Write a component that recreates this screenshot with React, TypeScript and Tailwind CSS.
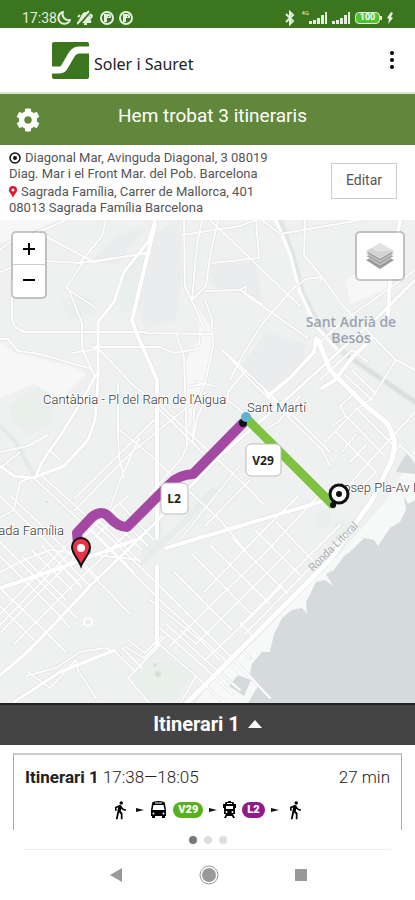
import React, { useState } from "react";
import { FaCog } from "react-icons/fa";
import { MdDirectionsWalk } from "react-icons/md";

interface Road {
  d: string;
  width: number;
}

// Street network of the base map, in map units
const minorRoads: string[] = [
  "M12 60 L12 98 Q14 112 30 112 L145 112 M145 113 L212 114",
  "M0 119 L8 119 L18 131 L40 134 L92 149",
  "M68 68 L82 103 L82 128 L94 155",
  "M92 127 L160 127 L174 133 L198 129 L200 115",
  "M72 133 L92 130 L98 128 L134 166 L142 172 L206 236",
  "M176 113 L184 137 L187 225 L182 238 L150 274",
  "M184 0 L185 66 L197 92 L205 110",
  "M202 0 L197 25 L192 80",
  "M218 0 L210 36 L206 66 L192 80",
  "M256 0 L259 38 L212 43",
  "M205 71 L240 70 L246 66 L245 74 L308 118 M240 70 L262 84",
  "M205 80 L212 100 L213 126 L206 160 L194 190 L193 222",
  "M120 210 L150 235 L220 300 L245 330",
  "M146 172 L250 270 L263 284",
  "M118 165 L118 210 L119 238 L124 258",
  "M206 172 L132 232 L75 290",
  "M154 200 L75 278 M139 218 L120 260 L110 288",
  "M205 180 L197 198 L194 216",
  "M0 232 L28 226 L48 215 M0 248 L20 232",
  "M34 258 L90 310 L160 380 L225 440",
  "M42 256 L98 306 L170 376 L240 446 L270 478",
  "M20 262 L14 290 L0 298",
  "M0 276 L45 320 L90 366 L86 372 L60 398 L8 450",
  "M10 275 L54 318 L98 361 L130 394",
  "M0 322 L40 362 L77 398 M0 336 L58 394 L70 408",
  "M0 368 L46 412 L66 432 M0 386 L34 420",
  "M0 413 L40 372 L84 328 L108 304",
  "M0 405 L36 368 L76 326 L100 300 L128 276",
  "M14 424 L60 378 L108 332 L150 290",
  "M0 394 L38 354 L66 326",
  "M22 336 L66 380 M32 330 L72 370 M42 326 L80 364",
  "M100 302 L130 332 L140 342 M92 310 L122 340 L134 352",
  "M108 296 L142 330 M112 290 L148 326 M120 284 L154 320",
  "M0 352 L24 340 L50 330 L140 340",
  "M75 335 L98 358 M60 345 L82 368",
  "M26 456 L56 448 L80 432 L105 428 L115 432",
  "M28 452 L50 468 L76 440 L78 450 L96 478",
  "M128 420 L145 433 L162 416 M124 426 L144 438 L166 416",
  "M115 432 L136 452 M122 428 L142 448",
  "M128 458 L160 425 L196 456 L180 484",
  "M128 458 L150 484 M196 456 L225 484",
  "M180 410 L196 424 L240 380 L290 330",
  "M160 408 L205 448 L232 474",
  "M166 404 L210 444 L240 470",
  "M150 380 L200 420 L220 440",
  "M174 352 L232 410 M192 334 L252 395",
  "M210 325 L270 384 M232 318 L288 374",
  "M255 310 L300 355 M276 302 L318 346",
  "M222 130 L250 160 L322 230 L330 246",
  "M226 133 L300 202 L330 232",
  "M222 130 L226 133 M228 180 L240 190 L270 222 L330 282",
  "M264 170 L290 196 M246 150 L228 172 L228 182",
  "M300 176 L278 202 L268 208",
  "M298 276 L256 318 L204 372",
  "M318 276 L268 330 L210 386 L170 426",
  "M240 245 L180 320 M250 260 L205 306",
  "M210 0 L300 86",
  "M305 0 L304 35 L322 57 L342 85 L396 140 L415 150",
  "M295 66 L262 104 L240 140 L230 160",
  "M292 70 L306 59 L322 57 L320 62",
  "M415 50 L342 102 L318 124",
  "M415 192 L380 230 L350 264",
  "M320 160 L352 130 L368 142",
  "M325 222 L356 190 L372 178 L396 140",
  "M332 206 L346 196 L340 186 L356 172",
  "M346 196 L385 236 M356 188 L394 226",
  "M336 212 L376 252 L364 264",
  "M356 214 L342 232 M366 225 L350 242",
  "M345 155 L372 180 M352 150 L376 174",
  "M415 240 L400 225 L390 240",
  "M240 406 L300 345 L340 305",
  "M245 414 L304 354 L348 312",
  "M228 440 L240 428 L250 438 M240 402 L254 418",
  "M205 440 L250 398 L282 366",
  "M0 30 L10 22 L24 18 L66 0",
  "M45 16 L94 42 L150 32 M0 52 L30 40 L80 43 L150 33",
  "M66 68 L96 88 M82 44 L66 68",
  "M262 0 L280 14 L360 0",
  "M182 15 L240 6 L256 0",
  "M196 162 L214 166 M190 166 L206 164",
];

const mainRoads: Road[] = [
  { d: "M106 0 L102 16 L80 43", width: 2 },
  { d: "M155 0 L148 22 L124 52 L114 82 L98 102 L98 160 L95 200 L88 220 L64 246 L32 258 L14 256 L0 246", width: 3 },
  { d: "M155 4 L132 100 L136 112 L157 160 L157 318 M157 346 L157 425", width: 4 },
  { d: "M96 155 L80 184 L60 216 L50 230 L42 242 L36 256", width: 3 },
  { d: "M50 230 L60 240 M20 262 L30 258", width: 2 },
  { d: "M0 455 L30 430 L88 368 L150 308 L220 236 L290 176 L345 126 L380 95 L415 60", width: 3 },
  { d: "M0 368 L60 348 L135 320 M166 328 L320 282 L348 268", width: 4 },
  { d: "M14 482 L60 452 L115 430", width: 3 },
  { d: "M400 0 L390 60 L388 96", width: 4 },
  { d: "M318 120 L330 150 L366 186 L388 204 L395 222 L392 240 L372 280 L330 340 L280 390 L220 450 L186 484", width: 5 },
  { d: "M316 118 L314 132 L290 158 L268 176", width: 4 },
  { d: "M372 118 L352 138 L335 160 L322 168", width: 4 },
];

const CASING = "#dcdedf";

const BaseMap: React.FC = () => (
  <g fill="none" strokeLinejoin="round" strokeLinecap="round">
    <rect width="415" height="483" fill="#eff0f0" />
    <g fill="#e9efeb">
      <path d="M10 185 L45 162 L58 172 L50 204 L30 215 L12 200Z" />
      <path d="M130 456 L158 428 L192 456 L176 480 L150 482Z" />
      <path d="M312 295 L328 288 L332 304 L320 310Z M334 302 L346 300 L356 306 L336 322Z" />
      <path d="M60 80 L92 74 L96 92 L70 100Z M124 50 L148 30 L136 90 L120 92Z" />
      <path d="M142 310 L160 296 L164 312 L142 340Z" />
    </g>
    <g fill="#ebeced">
      <path d="M156 12 L180 0 L182 60 L176 100 L145 108 L138 88Z" />
      <path d="M240 148 L266 112 L306 124 L304 142 L270 170Z" />
      <path d="M120 14 L145 8 L118 44 L90 42Z" />
      <path d="M210 44 L256 42 L262 80 L212 66Z" />
    </g>
    <g fill="#f6f7f6">
      <path d="M0 122 L14 132 L76 148 L86 154 L60 180 L34 164 L0 178Z" />
      <path d="M196 84 L212 110 L212 132 L196 190 L188 210 L186 140 L200 116Z" />
      <path d="M0 0 L60 0 L10 20 L0 24Z M346 60 L376 40 L400 50 L386 70 L350 84Z" />
    </g>
    {/* sea, beach and harbour */}
    <path d="M415 226 L405 250 L385 282 L345 328 L300 374 L260 416 L204 470 L196 484 L300 484 L415 300Z" fill="#f7f8f8" />
    <path
      d="M415 280 L408 284 L404 276 L406 290 L400 302 L390 308 L378 326 L374 320 L364 318 L350 332 L344 336 L334 350 L326 354 L333 366 L325 360 L316 362 L306 382 L307 394 L302 388 L292 390 L282 398 L274 414 L270 432 L262 432 L252 444 L250 454 L258 466 L248 483 L415 483Z"
      fill="#d5dadd"
    />
    <path d="M400 244 L407 233 L415 244 L415 254 L396 252Z M229 466 L238 455 L251 460 L244 476Z" fill="#d5dadd" />

    {/* river */}
    <path d="M280 0 L292 34 L302 72 L318 104 L345 134 L380 158 L415 182" stroke="#e2e5e5" strokeWidth="6" />
    <path d="M276 0 L290 34 L300 72 L316 106 L338 130" stroke="#fff" strokeWidth="3" />
    <path d="M345 134 L380 158 L415 182" stroke="#d6dbdc" strokeWidth="2" />
    <path d="M142 342 L180 306 L214 270" stroke="#e8ecea" strokeWidth="6" />
    <path d="M0 206 L16 222 L34 256" stroke="#e6e9e9" strokeWidth="4" />

    <g strokeWidth="3" stroke={CASING}>
      {minorRoads.map((d) => (
        <path key={d} d={d} />
      ))}
    </g>
    {mainRoads.map((road) => (
      <path key={road.d} d={road.d} stroke={CASING} strokeWidth={road.width + 1} />
    ))}
    <g strokeWidth="2" stroke="#fdfdfd">
      {minorRoads.map((d) => (
        <path key={d} d={d} />
      ))}
    </g>
    {mainRoads.map((road) => (
      <path key={road.d} d={road.d} stroke="#fff" strokeWidth={road.width} />
    ))}
    <circle cx="88" cy="402" r="4" stroke="#fff" strokeWidth="2" fill="#eceeee" />
    <g fill="#d9dedb">
      <circle cx="155" cy="445" r="2" />
      <circle cx="158" cy="454" r="3" />
      <circle cx="47" cy="282" r="1" />
    </g>
  </g>
);

const RouteMap: React.FC = () => (
  <svg viewBox="0 0 415 483" preserveAspectRatio="xMidYMid slice" className="block w-full font-[Roboto,sans-serif]">
    <BaseMap />

    <g fill="#99a3b1" fontFamily="Open Sans, sans-serif" fontWeight="600" fontSize="14" textAnchor="middle">
      <text x="351" y="107">Sant Adrià de</text>
      <text x="351" y="123">Besòs</text>
    </g>
    <text transform="translate(313 352) rotate(-45)" fontSize="11" fill="#a9adb0">
      Ronda Litoral
    </text>

    {/* transit legs */}
    <g fill="none" strokeLinecap="round" strokeLinejoin="round">
      <path d="M78 324 L77 313 L92 297 Q102 289 109 297 Q118 307 127 307 L170 264 Q178 255 193 254 L243 203" stroke="#a349a4" strokeWidth="10" />
      <path d="M247 199 L332 284" stroke="#7fc241" strokeWidth="9" />
    </g>
    <circle cx="243" cy="203" r="4" fill="#111" />
    <circle cx="333" cy="285" r="3" fill="#111" />
    <circle cx="246" cy="197" r="5" fill="#5fb3d0" />
    <circle cx="88" cy="331" r="3" fill="#5fb3d0" />

    <g fill="#333" fontSize="13" fontWeight="300" stroke="#fff" strokeWidth="2" strokeLinejoin="round" paintOrder="stroke">
      <text x="43" y="184">Cantàbria - Pl del Ram de l'Aigua</text>
      <text x="247" y="192">Sant Martí</text>
      <text x="64" y="315" textAnchor="end">Sagrada Família</text>
      <text x="336" y="272">Josep Pla-Av Diagonal</text>
    </g>

    {/* destination pin */}
    <path d="M81 346 C78 338 72 334 72 327 A9 9 0 0 1 90 327 C90 334 84 338 81 346Z" fill="#ea3349" stroke="#111" strokeWidth="2" />
    <circle cx="81" cy="328" r="4" fill="#fff" />

    {/* origin */}
    <circle cx="339" cy="274" r="9" fill="#fff" stroke="#111" strokeWidth="3" />
    <circle cx="339" cy="274" r="3" fill="#111" />

    <g fill="#fff" stroke="#bbb">
      <rect x="246" y="224" width="35" height="32" rx="5" />
      <rect x="161" y="263" width="27" height="31" rx="5" />
    </g>
    <g fill="#222" fontFamily="Open Sans, sans-serif" fontWeight="700" fontSize="12" textAnchor="middle">
      <text x="263" y="245">V29</text>
      <text x="174" y="283">L2</text>
    </g>
  </svg>
);

const Signal: React.FC = () => (
  <svg viewBox="0 0 19 12" className="h-3 w-[19px] fill-[#e3eedd]">
    <path d="M0 12V9h3v3zM4 12V8h3v4zM8 12V6h3v6zM12 12V3h3v9zM16 12V0h2v12z" />
  </svg>
);

const AppBadge: React.FC = () => (
  <svg viewBox="0 0 14 14" className="size-[14px]">
    <circle cx="7" cy="7" r="6" fill="none" stroke="#e3eedd" strokeWidth="2" />
    <path d="M4 3h3v8H4z" fill="#e3eedd" />
    <path d="M7 3h1q3 0 3 3v1H7z" fill="#e3eedd" />
    <path d="M8 5h1v1H8z" fill="#3b751d" />
  </svg>
);

const StatusBar: React.FC = () => (
  <div className="flex h-7 items-end justify-between bg-[#3b751d] pr-[21px] pb-[2px] pl-[22px] text-[#e3eedd]">
    <div className="flex items-center">
      <span className="text-[14px] leading-4">17:38</span>
      <svg viewBox="0 0 14 14" className="mr-[6px] size-[14px]">
        <path d="M6 1A6 6 0 1 0 13 9A6 6 0 0 1 6 1Z" fill="none" stroke="currentColor" strokeWidth="2" strokeLinejoin="round" />
      </svg>
      <svg viewBox="0 0 16 16" className="mr-[7px] size-4" fill="none" stroke="currentColor" strokeWidth="2">
        <path d="M2 11C5 10 4 3 9 3Q12 3 12 7T14 12H4M7 14h3" fill="currentColor" />
        <path d="M2 15L14 1" stroke="#3b751d" />
        <path d="M0 14L12 1M13 4l2 2-2 3M3 5l-2 2" />
      </svg>
      <div className="flex gap-[5px]">
        <AppBadge />
        <AppBadge />
      </div>
    </div>
    <div className="flex items-center">
      <svg viewBox="0 0 12 16" className="mr-[6px] h-4 w-3" fill="none" stroke="currentColor" strokeWidth="2">
        <path d="M2 4L9 11L6 14V2L9 5L2 12" />
      </svg>
      <span className="self-start text-[6px] leading-[6px]">4G</span>
      <Signal />
      <span className="ml-1 flex">
        <Signal />
      </span>
      <span className="ml-1 flex h-3 w-[25px] items-center justify-center rounded-[4px] border border-[#e3eedd] bg-[#4fc32f] text-[9px] font-bold text-white">
        100
      </span>
      <span className="h-1 w-[2px] bg-[#e3eedd]" />
      <svg viewBox="0 0 8 12" className="ml-1 h-3 w-2">
        <path d="M5 0L1 6L3 7L2 12L7 6L5 5L7 1Z" fill="currentColor" />
      </svg>
    </div>
  </div>
);

const Header: React.FC = () => (
  <header className="flex h-[66px] items-center justify-between border-b-2 border-[#dbe4d3] bg-white pr-4 pl-[52px]">
    <a href="#" className="flex items-center gap-[5px]">
      <svg viewBox="0 0 37 37" className="size-[37px]">
        <rect width="37" height="37" rx="2" fill="#3b751d" />
        <path d="M0 28H8Q11 28 13 24L20 12Q23 8 27 8H37" fill="none" stroke="#fff" strokeWidth="7" />
      </svg>
      <span className="mt-2 font-['Noto_Sans',sans-serif] text-[16px] leading-6 text-[#222]">Soler i Sauret</span>
    </a>
    <button aria-label="Menú" className="flex flex-col items-center gap-[3px] px-[5px]">
      <span className="size-1 rounded-full bg-black" />
      <span className="size-1 rounded-full bg-black" />
      <span className="size-1 rounded-full bg-black" />
    </button>
  </header>
);

const SearchSummary: React.FC = () => (
  <section className="flex h-[75px] items-center justify-between bg-white pr-[18px] pl-[9px]">
    <div className="text-[13px] leading-[16px] text-[#555]">
      <p>
        <svg viewBox="0 0 12 12" className="mr-1 inline size-3 align-[-2px]">
          <circle cx="6" cy="6" r="5" fill="none" stroke="#111" strokeWidth="1.5" />
          <circle cx="6" cy="6" r="2" fill="#111" />
        </svg>
        Diagonal Mar, Avinguda Diagonal, 3 08019
      </p>
      <p>Diag. Mar i el Front Mar. del Pob. Barcelona</p>
      <p className="mt-[2px]">
        <svg viewBox="0 0 8 12" className="mr-1 inline h-3 w-2 align-[-2px]">
          <path d="M4 12C3 8 0 7 0 4A4 4 0 0 1 8 4C8 7 5 8 4 12Z" fill="#e0182d" />
          <circle cx="4" cy="4" r="1.5" fill="#fff" />
        </svg>
        Sagrada Família, Carrer de Mallorca, 401
      </p>
      <p>08013 Sagrada Família Barcelona</p>
    </div>
    <button className="mb-1 h-9 w-[66px] shrink-0 border border-[#ccc] bg-white text-[14px] text-[#555]">Editar</button>
  </section>
);

const Arrow: React.FC = () => (
  <svg viewBox="0 0 8 6" className="h-[6px] w-2">
    <path d="M0 1L8 3L0 5Z" fill="#111" />
  </svg>
);

const BusIcon: React.FC = () => (
  <svg viewBox="0 0 17 18" className="h-[18px] w-[17px]" fill="currentColor">
    <path d="M3 1Q8.500 -1 14 1Q15 1 15 3L16 9V15H15V17H12V15H5V17H2V15H1V9L2 3Q2 1 3 1Z" />
    <path d="M5 1.500H12V2.500H5ZM3.500 4H13.500L14.500 9H2.500Z" fill="#fff" />
    <circle cx="3.500" cy="12.500" r="1" fill="#fff" />
    <circle cx="13.500" cy="12.500" r="1" fill="#fff" />
  </svg>
);

const TrainIcon: React.FC = () => (
  <svg viewBox="0 0 13 18" className="h-[18px] w-[13px]" fill="currentColor">
    <path d="M5 0H8V1H10Q11 1 11 3H13V7H12V13H10L12 17H10L9 15H4L3 17H1L3 13H1V7H0V3H2Q2 1 3 1H5Z" />
    <path d="M4 2H9V3H4ZM3 5H10V8H3Z" fill="#fff" />
    <circle cx="3.500" cy="11" r="1" fill="#fff" />
    <circle cx="9.500" cy="11" r="1" fill="#fff" />
  </svg>
);

const ItineraryCard: React.FC = () => (
  <article className="mx-[13px] mt-2 h-[77px] border-x border-t-2 border-[#aaa] border-t-[#ccc] px-[11px] pt-[10px] text-[#222]">
    <div className="flex justify-between text-[17px] leading-6">
      <p>
        <b className="font-bold">Itinerari 1</b> <span className="font-light">17:38—18:05</span>
      </p>
      <span className="font-light">27 min</span>
    </div>
    <div className="mt-[10px] flex h-[22px] items-center justify-center gap-[6px] text-black">
      <MdDirectionsWalk className="size-5" />
      <Arrow />
      <BusIcon />
      <span className="rounded-full bg-[#58b01c] px-[5px] text-[11px] leading-4 font-black text-white">V29</span>
      <Arrow />
      <TrainIcon />
      <span className="rounded-full bg-[#8f1a8c] px-[5px] text-[11px] leading-4 font-black text-white">L2</span>
      <Arrow />
      <MdDirectionsWalk className="size-5" />
    </div>
  </article>
);

const App: React.FC = () => {
  const [slide, setSlide] = useState<number>(0);

  return (
    <div className="min-h-screen overflow-hidden bg-white font-[Roboto,sans-serif]">
      <StatusBar />
      <Header />
      <div className="relative flex h-[51px] items-center justify-center bg-[#61873a] pl-[10px] text-white">
        <button aria-label="Opcions" className="absolute left-4">
          <FaCog className="size-6" />
        </button>
        <h1 className="pb-2 text-[19px] leading-6">Hem trobat 3 itineraris</h1>
      </div>
      <SearchSummary />

      <main className="relative">
        <RouteMap />
        <div className="absolute top-[11px] left-[11px] flex w-9 flex-col rounded-[5px] border-2 border-black/20 bg-white bg-clip-padding text-black">
          <button aria-label="Apropa" className="flex h-8 items-center justify-center border-b border-[#ccc]">
            <svg viewBox="0 0 12 12" className="size-3">
              <path d="M6 0V12M0 6H12" stroke="currentColor" strokeWidth="2" />
            </svg>
          </button>
          <button aria-label="Allunya" className="flex h-8 items-center justify-center">
            <svg viewBox="0 0 12 12" className="size-3">
              <path d="M0 5H12" stroke="currentColor" strokeWidth="2" />
            </svg>
          </button>
        </div>
        <button aria-label="Capes" className="absolute top-[11px] right-[10px] flex size-[50px] items-center justify-center rounded-[5px] border-2 border-black/20 bg-white bg-clip-padding">
          <svg viewBox="0 0 28 28" className="size-7">
            <path d="M0 18L14 27L28 18L24 16L14 22L4 16Z" fill="#9a9a9a" />
            <path d="M0 14L14 23L28 14L24 12L14 18L4 12Z" fill="#a8a8a8" stroke="#fff" strokeWidth="0.5" />
            <path d="M0 11L14 19L28 11L24 9L14 15L4 9Z" fill="#999" stroke="#fff" strokeWidth="0.5" />
            <path d="M14 1L28 9L14 17L0 9Z" fill="#d4d4d4" />
            <path d="M14 1L28 9L20 9Q10 11 6 6Z" fill="#e2e2e2" />
          </svg>
        </button>
      </main>

      <button className="flex h-[42px] w-full items-center justify-center gap-2 border-t-2 border-[#222] bg-[#444] pb-[2px] text-[20px] font-bold text-white">
        Itinerari 1
        <svg viewBox="0 0 14 8" className="h-2 w-[14px]">
          <path d="M7 0L14 8H0Z" fill="currentColor" />
        </svg>
      </button>

      <ItineraryCard />

      <div className="mx-6 flex h-5 items-center justify-center gap-[7px] border-b border-[#eee]">
        {[0, 1, 2].map((i) => (
          <button
            key={i}
            aria-label={`Itinerari ${i + 1}`}
            onClick={() => setSlide(i)}
            className={i === slide ? "size-2 rounded-full bg-[#777]" : "size-2 rounded-full bg-[#ddd]"}
          />
        ))}
      </div>

      <nav className="flex h-[50px] items-center justify-center gap-[76px] text-[#999]">
        <button aria-label="Enrere">
          <svg viewBox="0 0 14 14" className="size-[14px]">
            <path d="M1 7L13 0V14Z" fill="currentColor" />
          </svg>
        </button>
        <button aria-label="Inici">
          <svg viewBox="0 0 20 20" className="size-5">
            <circle cx="10" cy="10" r="9" fill="none" stroke="currentColor" />
            <circle cx="10" cy="10" r="7" fill="currentColor" />
          </svg>
        </button>
        <button aria-label="Recents">
          <span className="block size-3 bg-[#999]" />
        </button>
      </nav>
    </div>
  );
};

export default App;
